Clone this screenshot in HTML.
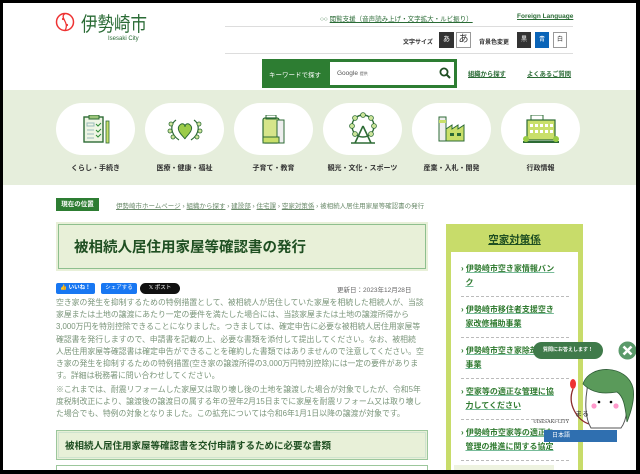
<!DOCTYPE html><html><head><meta charset="utf-8"><style>
*{margin:0;padding:0;box-sizing:border-box}
body{width:640px;height:474px;overflow:hidden;background:#000;font-family:"Liberation Sans","Noto Sans CJK JP",sans-serif;position:relative}
.pg{position:absolute;left:3px;top:3px;width:633px;height:467px;background:#fff;overflow:hidden}
.a{position:absolute;white-space:nowrap}
u{text-decoration:underline}
.band{position:absolute;left:0;top:87px;width:633px;height:95px;background:#e6eedc}
.ic{position:absolute;top:13px;width:79px;height:52px;background:#fff;border-radius:26px}
.lb{position:absolute;top:73px;width:79px;text-align:center;font-size:7px;font-weight:bold;color:#333}
.tx{position:absolute;left:53px;font-size:7.85px;color:#7a957a;line-height:12.2px;white-space:nowrap}
.sl{position:absolute;left:10px;font-size:8px;color:#2f7a2f;line-height:14px;font-weight:bold}
.sl u{text-decoration-color:#7b9}
.dl{position:absolute;left:10px;width:108px;border-top:1px dashed #bbb}
</style></head><body><div class="pg">
<!-- logo -->
<svg class="a" style="left:52px;top:8px" width="20" height="22" viewBox="0 0 20 22"><circle cx="10" cy="11" r="8.5" fill="none" stroke="#e33" stroke-width="1.5"/><path d="M10 2.5 C4 7 15 11 10 19.5" fill="none" stroke="#e33" stroke-width="1.3"/><circle cx="8" cy="8" r="1.1" fill="#e33"/><circle cx="12" cy="14" r="1.1" fill="#e33"/></svg>
<div class="a" style="left:78px;top:5px;font-size:16.5px;color:#2a6b35;letter-spacing:0px;transform:scaleY(1.2);transform-origin:top left">伊勢崎市</div>
<div class="a" style="left:105px;top:33px;font-size:6px;color:#2a6b35">Isesaki City</div>
<div class="a" style="left:317px;top:10px;font-size:6.5px;color:#2a6b35">○○ <u>閲覧支援（音声読み上げ・文字拡大・ルビ振り）</u></div>
<div class="a" style="left:514px;top:10px;font-size:6.5px;color:#2a6b35;font-weight:bold"><u>Foreign Language</u></div>
<div class="a" style="left:222px;top:23px;width:348px;border-top:1px solid #ddd"></div>
<div class="a" style="left:400px;top:34px;font-size:6px;font-weight:bold;color:#333">文字サイズ</div>
<div class="a" style="left:436px;top:29px;width:15px;height:16px;background:#333;color:#fff;font-size:7px;text-align:center;line-height:16px">あ</div>
<div class="a" style="left:453px;top:29px;width:15px;height:16px;border:1px solid #999;color:#333;font-size:10px;text-align:center;line-height:14px">あ</div>
<div class="a" style="left:476px;top:34px;font-size:6px;font-weight:bold;color:#333">背景色変更</div>
<div class="a" style="left:514px;top:29px;width:14px;height:16px;background:#333;color:#fff;font-size:6px;text-align:center;line-height:16px">黒</div>
<div class="a" style="left:532px;top:29px;width:14px;height:16px;background:#0a64b8;color:#fff;font-size:6px;text-align:center;line-height:16px">青</div>
<div class="a" style="left:550px;top:29px;width:14px;height:16px;border:1px solid #999;color:#333;font-size:6px;text-align:center;line-height:14px">白</div>
<div class="a" style="left:222px;top:50px;width:348px;border-top:1px solid #ddd"></div>
<div class="a" style="left:259px;top:56px;width:195px;height:29px;background:#2d7d32"></div>
<div class="a" style="left:266px;top:66px;font-size:6.5px;color:#fff">キーワードで探す</div>
<div class="a" style="left:327px;top:59px;width:124px;height:23px;background:#fff"></div>
<div class="a" style="left:334px;top:67px;font-size:6.5px;color:#555">Google <span style="font-size:4px">提供</span></div>
<svg class="a" style="left:436px;top:64px" width="12" height="12" viewBox="0 0 12 12"><circle cx="5" cy="5" r="3.6" fill="none" stroke="#1f4f22" stroke-width="1.8"/><path d="M7.5 7.5 L11 11" stroke="#1f4f22" stroke-width="2"/></svg>
<div class="a" style="left:465px;top:66px;font-size:6.3px;font-weight:bold;color:#2a6b35"><u>組織から探す</u></div>
<div class="a" style="left:524px;top:66px;font-size:6.3px;font-weight:bold;color:#2a6b35"><u>よくあるご質問</u></div>
<div class="band">
<div class="ic" style="left:53px"><svg style="position:absolute;left:26px;top:12px" width="28" height="30"><rect x="2" y="2" width="19" height="25" fill="#eef5e4" stroke="#2d6b35" stroke-width="1.4"/><rect x="7" y="0" width="10" height="4" fill="#9cc47a" stroke="#2d6b35"/><rect x="5" y="8" width="7" height="3" fill="none" stroke="#9bb"/><path d="M5 15h7M5 19h7M5 23h7" stroke="#9bb"/><path d="M14 9l2 2 3-3M14 15l2 2 3-3M14 20l2 2 3-3" stroke="#2d8b35" fill="none"/><rect x="24" y="6" width="3" height="22" fill="#c9df6a" stroke="#2d6b35" stroke-width=".8"/></svg></div>
<div class="ic" style="left:142px"><svg style="position:absolute;left:22px;top:13px" width="36" height="28"><path d="M12 10c3-4 6-2 6 1 0-3 3-5 6-1 3 5-6 11-6 13-1-2-9-8-6-13z" fill="#9ccc4a" stroke="#2d6b35"/><path d="M9 4c-6 4-6 14 3 20M27 4c6 4 6 14-3 20" fill="none" stroke="#2d6b35" stroke-width="1.2"/><g fill="#cde59b" stroke="#2d6b35" stroke-width=".8"><circle cx="4" cy="8" r="2"/><circle cx="3" cy="15" r="2"/><circle cx="6" cy="21" r="2"/><circle cx="32" cy="8" r="2"/><circle cx="33" cy="15" r="2"/><circle cx="30" cy="21" r="2"/></g></svg></div>
<div class="ic" style="left:231px"><svg style="position:absolute;left:27px;top:12px" width="26" height="30"><rect x="2" y="3" width="16" height="25" rx="2" fill="#d6e58a" stroke="#2d6b35" stroke-width="1.2"/><rect x="16" y="5" width="7" height="23" fill="#eee" stroke="#2d6b35"/><rect x="5" y="0" width="10" height="4" fill="none" stroke="#2d6b35"/><rect x="2" y="22" width="16" height="6" fill="#c9df6a" stroke="#2d6b35"/></svg></div>
<div class="ic" style="left:320px"><svg style="position:absolute;left:24px;top:9px" width="32" height="34"><circle cx="16" cy="14" r="11" fill="none" stroke="#2d6b35" stroke-width="1.4"/><g fill="#cde59b" stroke="#2d6b35" stroke-width=".8"><circle cx="16" cy="3" r="2.4"/><circle cx="27" cy="14" r="2.4"/><circle cx="5" cy="14" r="2.4"/><circle cx="8" cy="6" r="2.4"/><circle cx="24" cy="6" r="2.4"/><circle cx="8" cy="22" r="2.4"/><circle cx="24" cy="22" r="2.4"/></g><path d="M16 14L8 31M16 14L24 31M4 31h24" stroke="#2d6b35" stroke-width="1.6"/></svg></div>
<div class="ic" style="left:409px"><svg style="position:absolute;left:25px;top:12px" width="30" height="28"><rect x="2" y="2" width="7" height="24" fill="#eee" stroke="#2d6b35"/><rect x="2" y="5" width="7" height="3" fill="#c9df6a"/><path d="M9 26V14l6-4v4l6-4v4l6-4v16z" fill="#c9df6a" stroke="#2d6b35"/><rect x="13" y="18" width="4" height="3" fill="#2d6b35"/><rect x="20" y="18" width="4" height="3" fill="#2d6b35"/></svg></div>
<div class="ic" style="left:498px"><svg style="position:absolute;left:20px;top:12px" width="40" height="30"><rect x="10" y="0" width="12" height="5" fill="none" stroke="#2d6b35"/><rect x="6" y="5" width="28" height="20" fill="#c9df6a" stroke="#2d6b35" stroke-width="1.2"/><g fill="#fff"><rect x="9" y="9" width="3" height="3"/><rect x="14" y="9" width="3" height="3"/><rect x="19" y="9" width="3" height="3"/><rect x="24" y="9" width="3" height="3"/><rect x="29" y="9" width="3" height="3"/><rect x="9" y="15" width="3" height="3"/><rect x="14" y="15" width="3" height="3"/><rect x="19" y="15" width="3" height="3"/><rect x="24" y="15" width="3" height="3"/><rect x="29" y="15" width="3" height="3"/></g><path d="M2 27h36" stroke="#2d6b35" stroke-width="2"/><circle cx="5" cy="24" r="3" fill="#9c4"/><circle cx="35" cy="24" r="3" fill="#9c4"/></svg></div>
<div class="lb" style="left:53px">くらし・手続き</div><div class="lb" style="left:142px">医療・健康・福祉</div><div class="lb" style="left:231px">子育て・教育</div><div class="lb" style="left:320px">観光・文化・スポーツ</div><div class="lb" style="left:409px">産業・入札・開発</div><div class="lb" style="left:498px">行政情報</div>
</div>
<div class="a" style="left:53px;top:195px;width:43px;height:13px;background:#2d7d32;color:#fff;font-size:6.5px;font-weight:bold;text-align:center;line-height:13px">現在の位置</div>
<div class="a" style="left:113px;top:197px;font-size:6.5px;color:#6a8a6a"><u>伊勢崎市ホームページ</u> › <u>組織から探す</u> › <u>建設部</u> › <u>住宅課</u> › <u>空家対策係</u> › 被相続人居住用家屋等確認書の発行</div>
<div class="a" style="left:53px;top:219px;width:372px;height:49px;background:#e8f0d8;border:2px solid #e8f0d8;outline:1px solid #8ebf8e;outline-offset:-3px"></div>
<div class="a" style="left:71px;top:233px;font-size:14.5px;font-weight:bold;color:#1f4f22">被相続人居住用家屋等確認書の発行</div>
<div class="a" style="left:53px;top:280px;width:39px;height:11px;background:#1877f2;border-radius:2px;color:#fff;font-size:5.5px;line-height:11px;text-align:center;font-weight:bold">👍 いいね！</div>
<div class="a" style="left:98px;top:280px;width:36px;height:11px;background:#1877f2;border-radius:2px;color:#fff;font-size:5.5px;line-height:11px;text-align:center">シェアする</div>
<div class="a" style="left:137px;top:280px;width:40px;height:11px;background:#111;border-radius:6px;color:#fff;font-size:5.5px;line-height:11px;text-align:center">𝕏 ポスト</div>
<div class="a" style="left:334px;top:281px;font-size:6.5px;color:#666">更新日：2023年12月28日</div>
<div class="tx" style="top:294px">空き家の発生を抑制するための特例措置として、被相続人が居住していた家屋を相続した相続人が、当該<br>家屋または土地の譲渡にあたり一定の要件を満たした場合には、当該家屋または土地の譲渡所得から<br>3,000万円を特別控除できることになりました。つきましては、確定申告に必要な被相続人居住用家屋等<br>確認書を発行しますので、申請書を記載の上、必要な書類を添付して提出してください。なお、被相続<br>人居住用家屋等確認書は確定申告ができることを確約した書類ではありませんので注意してください。空<br>き家の発生を抑制するための特例措置(空き家の譲渡所得の3,000万円特別控除)には一定の要件がありま<br>す。詳細は税務署に問い合わせしてください。</div>
<div class="tx" style="top:381px">※これまでは、耐震リフォームした家屋又は取り壊し後の土地を譲渡した場合が対象でしたが、令和5年<br>度税制改正により、譲渡後の譲渡日の属する年の翌年2月15日までに家屋を耐震リフォーム又は取り壊し<br>た場合でも、特例の対象となりました。この拡充については令和6年1月1日以降の譲渡が対象です。</div>
<div class="a" style="left:53px;top:427px;width:372px;height:30px;background:#e8f0d8;border:1px solid #9cc79c;outline:1px solid #cfe3cf;outline-offset:-3px"></div>
<div class="a" style="left:62px;top:435px;font-size:9.5px;font-weight:bold;color:#1f4f22">被相続人居住用家屋等確認書を交付申請するために必要な書類</div>
<div class="a" style="left:53px;top:462px;width:372px;height:10px;border:1px solid #9cc79c;border-bottom:none"></div>
<!-- sidebar -->
<div class="a" style="left:443px;top:221px;width:137px;height:250px;background:#c8dc6a">
<div class="a" style="left:0;top:8px;width:137px;text-align:center;font-size:10.5px;font-weight:bold;color:#1f4f22"><u>空家対策係</u></div>
<div class="a" style="left:5px;top:28px;width:127px;height:230px;background:#fff">
<div class="sl" style="top:10px">› <u>伊勢崎市空き家情報バン</u><br>&nbsp;&nbsp;<u>ク</u></div>
<div class="dl" style="top:44px"></div>
<div class="sl" style="top:51px">› <u>伊勢崎市移住者支援空き</u><br>&nbsp;&nbsp;<u>家改修補助事業</u></div>
<div class="dl" style="top:85px"></div>
<div class="sl" style="top:92px">› <u>伊勢崎市空き家除却補助</u><br>&nbsp;&nbsp;<u>事業</u></div>
<div class="dl" style="top:126px"></div>
<div class="sl" style="top:133px">› <u>空家等の適正な管理に協</u><br>&nbsp;&nbsp;<u>力してください</u></div>
<div class="dl" style="top:167px"></div>
<div class="sl" style="top:174px">› <u>伊勢崎市空家等の適正な</u><br>&nbsp;&nbsp;<u>管理の推進に関する協定</u></div>
<div class="dl" style="top:208px"></div>
<div class="sl" style="top:215px">› <u>空家等対策条例を制定し</u><br>&nbsp;&nbsp;<u>ました</u></div>
</div></div>
<div class="a" style="left:451px;top:462px;width:100px;height:10px;background:#eef3e0"></div>
<!-- mascot -->
<div class="a" style="left:530px;top:339px;width:70px;height:17px;background:#3f7a4a;border-radius:9px;color:#fff;font-size:5px;text-align:center;line-height:17px;font-weight:bold">質問にお答えします！</div>
<svg class="a" style="left:615px;top:338px" width="19" height="19"><circle cx="9.5" cy="9.5" r="9" fill="#5a9a6a"/><path d="M5.5 5.5L13.5 13.5M13.5 5.5L5.5 13.5" stroke="#fff" stroke-width="2.6"/></svg>
<svg class="a" style="left:562px;top:357px" width="72" height="72"><ellipse cx="8" cy="24" rx="3" ry="5" fill="#e33"/><path d="M8 29C2 44 12 60 24 64" fill="none" stroke="#8b2b2b" stroke-width="1.3"/><path d="M22 30c0-12 32-14 38 0 4 14 2 30-4 38H26c-6-10-6-26-4-38z" fill="#fff" stroke="#555"/><path d="M18 24c6-20 44-20 50 4 2 10-2 24-6 34-2-18-4-26-10-30-12 2-24 2-34-8z" fill="#5a9a5a" stroke="#2d5b35" stroke-width=".8"/><circle cx="34" cy="42" r="1.3"/><circle cx="46" cy="42" r="1.3"/><circle cx="29" cy="46" r="2.6" fill="#f9c"/><circle cx="51" cy="46" r="2.6" fill="#f9c"/></svg>
<div class="a" style="left:572px;top:406px;font-size:7px;color:#333">まる</div>
<div class="a" style="left:530px;top:417px;font-size:5px;color:#333;font-family:'Liberation Serif',serif">©ISESAKI·CITY</div>
<div class="a" style="left:541px;top:427px;width:73px;height:12px;background:#2f6fb0;color:#fff;font-size:6px;line-height:12px;padding-left:8px">日本語</div>
</div></body></html>
